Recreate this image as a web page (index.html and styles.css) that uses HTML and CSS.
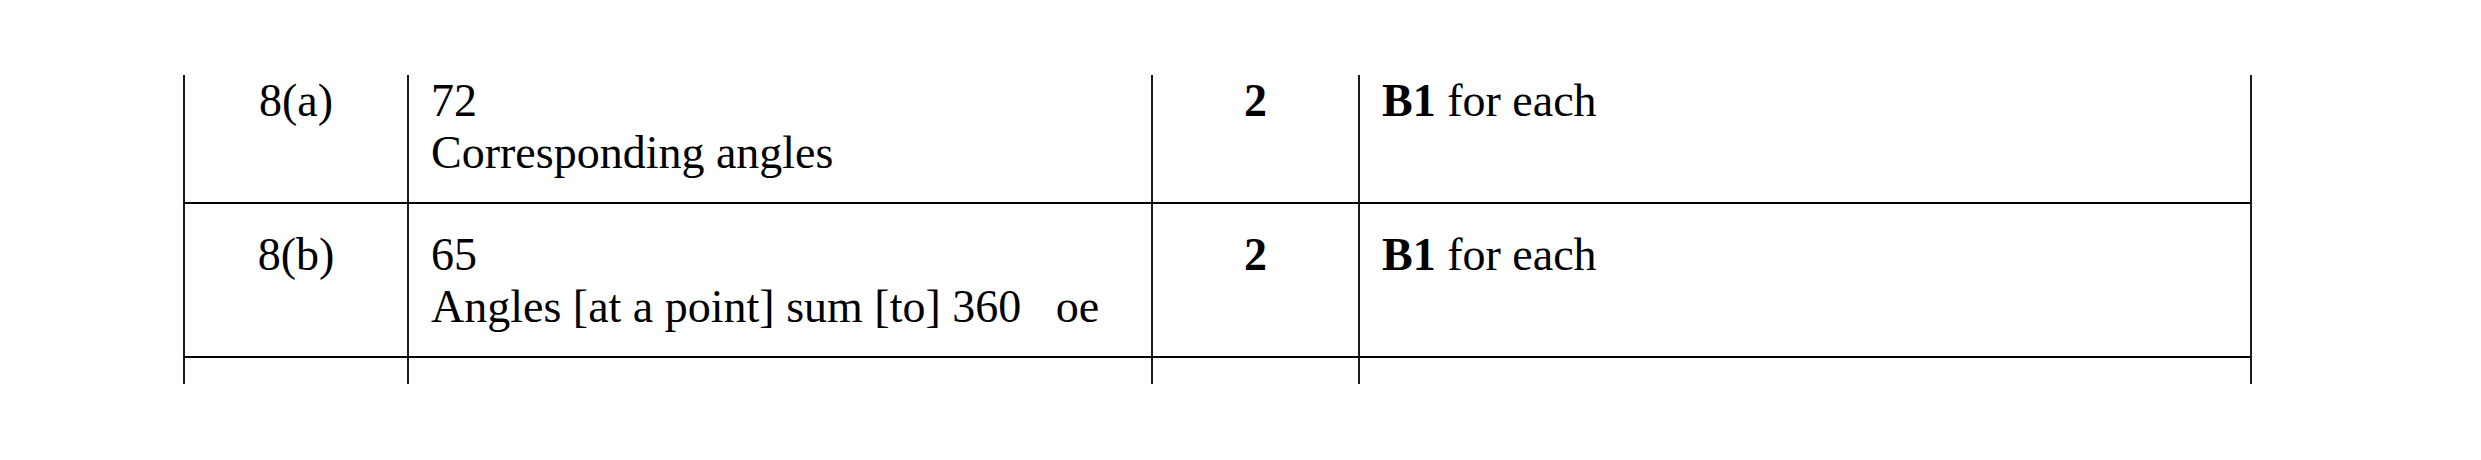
FILE: index.html
```html
<!DOCTYPE html>
<html lang="en">
<head>
<meta charset="utf-8">
<title>Mark scheme</title>
<link rel="stylesheet" href="styles.css">
</head>
<body>
<div class="scheme">
  <div class="cell q row1">8(a)</div>
  <div class="cell ans row1"><div>72</div><div>Corresponding angles</div></div>
  <div class="cell mark row1">2</div>
  <div class="cell note row1"><b>B1</b> for each</div>

  <div class="cell q row2">8(b)</div>
  <div class="cell ans row2"><div>65</div><div>Angles [at a point] sum [to] 360&nbsp;&nbsp;&nbsp;oe</div></div>
  <div class="cell mark row2">2</div>
  <div class="cell note row2"><b>B1</b> for each</div>

  <div class="cell row3"></div>
  <div class="cell row3"></div>
  <div class="cell row3"></div>
  <div class="cell row3"></div>
</div>
</body>
</html>
```

FILE: styles.css
```css
html, body {
  margin: 0;
  padding: 0;
  background: #fff;
}

body {
  font-family: "Liberation Serif", "Times New Roman", serif;
  font-size: 46px;
  line-height: 52px;
  color: #000;
}

.scheme {
  display: grid;
  grid-template-columns: 224px 744px 207px 892px;
  grid-template-rows: 129px 154px 26px;
  width: max-content;
  margin: 75px 0 0 183px;
  border-right: 2px solid #1c1c1c;
}

.cell {
  box-sizing: border-box;
  border-left: 2px solid #1c1c1c;
  white-space: nowrap;
}

.row1, .row2 {
  border-bottom: 2px solid #000;
}

.row2 {
  padding-top: 25px;
}

.q {
  text-align: center;
}

.mark {
  text-align: center;
  font-weight: bold;
}

.ans, .note {
  padding-left: 22px;
}

.note b {
  font-weight: bold;
}
```
